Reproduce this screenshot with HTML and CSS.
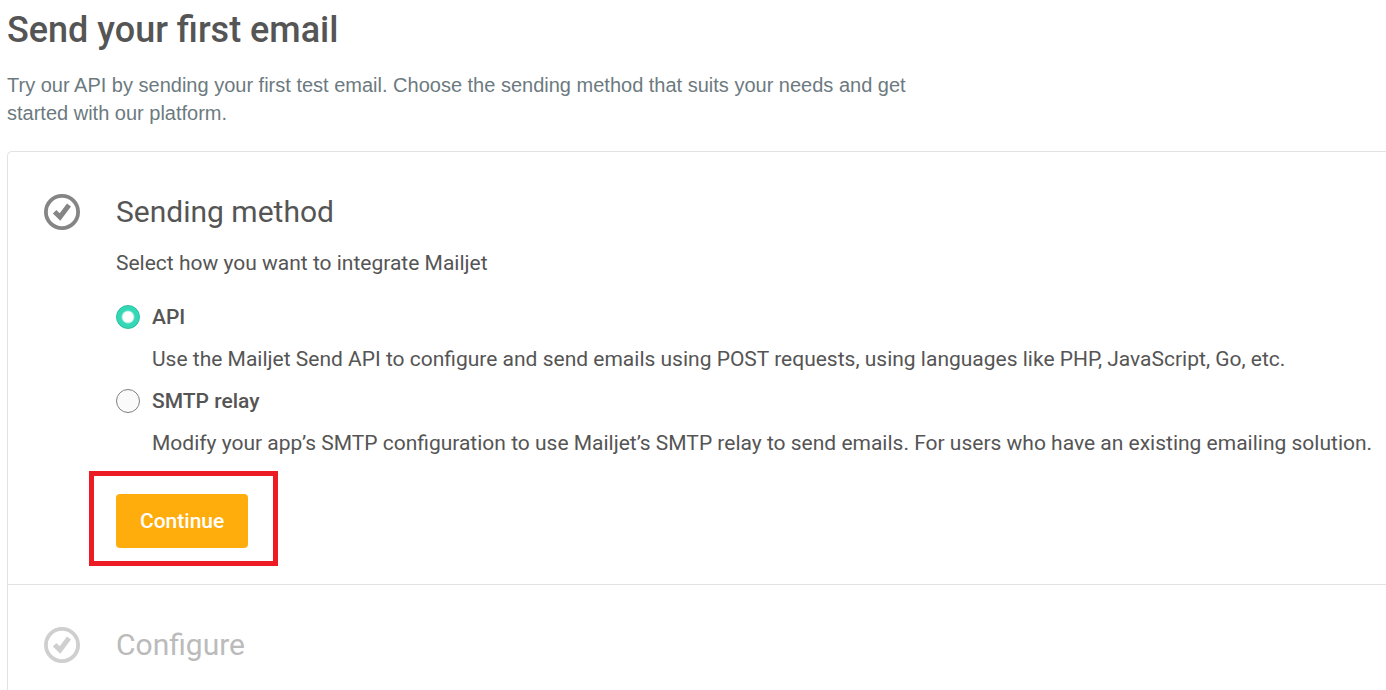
FILE: index.html
```
<!DOCTYPE html>
<html lang="en">
<head>
<meta charset="utf-8">
<title>Send your first email</title>
<link rel="stylesheet" href="styles.css">
</head>
<body>
<main class="page">
  <h1 class="page-title">Send your first email</h1>
  <p class="intro">Try our API by sending your first test email. Choose the sending method that suits your needs and get started with our platform.</p>
  <div class="steps">
    <section class="step">
      <svg class="step-icon" viewBox="0 0 36 36" aria-hidden="true"><circle cx="18" cy="18" r="16.1"/><path class="tick" d="M10.6 17.700L16 23L25 11"/></svg>
      <form class="step-body">
        <h2 class="step-title">Sending method</h2>
        <p class="step-text">Select how you want to integrate Mailjet</p>
        <div class="option">
          <input class="radio" type="radio" name="method" id="api" checked>
          <label class="option-name" for="api">API</label>
          <p class="option-text">Use the Mailjet Send API to configure and send emails using POST requests, using languages like PHP, JavaScript, Go, etc.</p>
        </div>
        <div class="option">
          <input class="radio" type="radio" name="method" id="smtp">
          <label class="option-name" for="smtp">SMTP relay</label>
          <p class="option-text">Modify your app’s SMTP configuration to use Mailjet’s SMTP relay to send emails. For users who have an existing emailing solution.</p>
        </div>
        <div class="highlight"><button class="button" type="button">Continue</button></div>
      </form>
    </section>
    <section class="step step-disabled">
      <svg class="step-icon" viewBox="0 0 36 36" aria-hidden="true"><circle cx="18" cy="18" r="16.1"/><path class="tick" d="M10.6 17.700L16 23L25 11"/></svg>
      <div class="step-body"><h2 class="step-title">Configure</h2></div>
    </section>
  </div>
</main>
</body>
</html>
```
FILE: styles.css
```
* { box-sizing: border-box; }
body { margin: 0; background: #fff; color: #555; font-family: Roboto, sans-serif; font-size: 21px; line-height: 30px; }
h1, h2, p { margin: 0; }
.page { display: flex; flex-direction: column; min-height: 100vh; padding: 8px 0 0 7px; }
.page-title { font-size: 36px; line-height: 44px; font-weight: 500; }
.intro { max-width: 900px; margin-top: 19px; color: #6c7a80; font-family: "Liberation Sans", Arial, sans-serif; font-size: 20px; line-height: 28px; }
.steps { flex: 1; margin-top: 24px; border: 1px solid #e2e2e2; border-width: 1px 0 0 1px; border-radius: 5px 0 0 0; }
.step { display: flex; gap: 36px; padding: 40px 0 18px 36px; }
.step-icon { flex: none; width: 36px; height: 36px; margin-top: 2px; fill: none; stroke: #858585; stroke-width: 3.8; }
.tick { stroke-width: 5; }
.step-body { flex: 1; min-width: 0; }
.step-title { font-size: 30px; line-height: 40px; font-weight: 400; }
.step-text { margin: 16px 0 24px; }
.option { display: grid; grid-template-columns: 24px 1fr; column-gap: 12px; row-gap: 12px; align-items: center; margin-bottom: 12px; }
.radio { appearance: none; width: 24px; height: 24px; margin: 0; border: 1px solid #808080; border-radius: 50%; background: #fafafa; }
.radio:checked { border: 1px solid #25bd9d; background: radial-gradient(circle, #fff 5px, #34d8b6 7px); }
.option-name { font-weight: 500; }
.option-text { grid-column: 2; }
.highlight { width: fit-content; margin: 13px 0 0 -27px; padding: 18px 25px 13px 22px; border: 5px solid #ed1c24; }
.button { display: block; height: 54px; padding: 0 24px; border: 0; border-radius: 4px; background: #ffad0d; color: #fff; font: 500 21px/30px Roboto, sans-serif; }
.step-disabled { border-top: 1px solid #e2e2e2; color: #bbb; }
.step-disabled .step-icon { stroke: #cfcfcf; }
```
